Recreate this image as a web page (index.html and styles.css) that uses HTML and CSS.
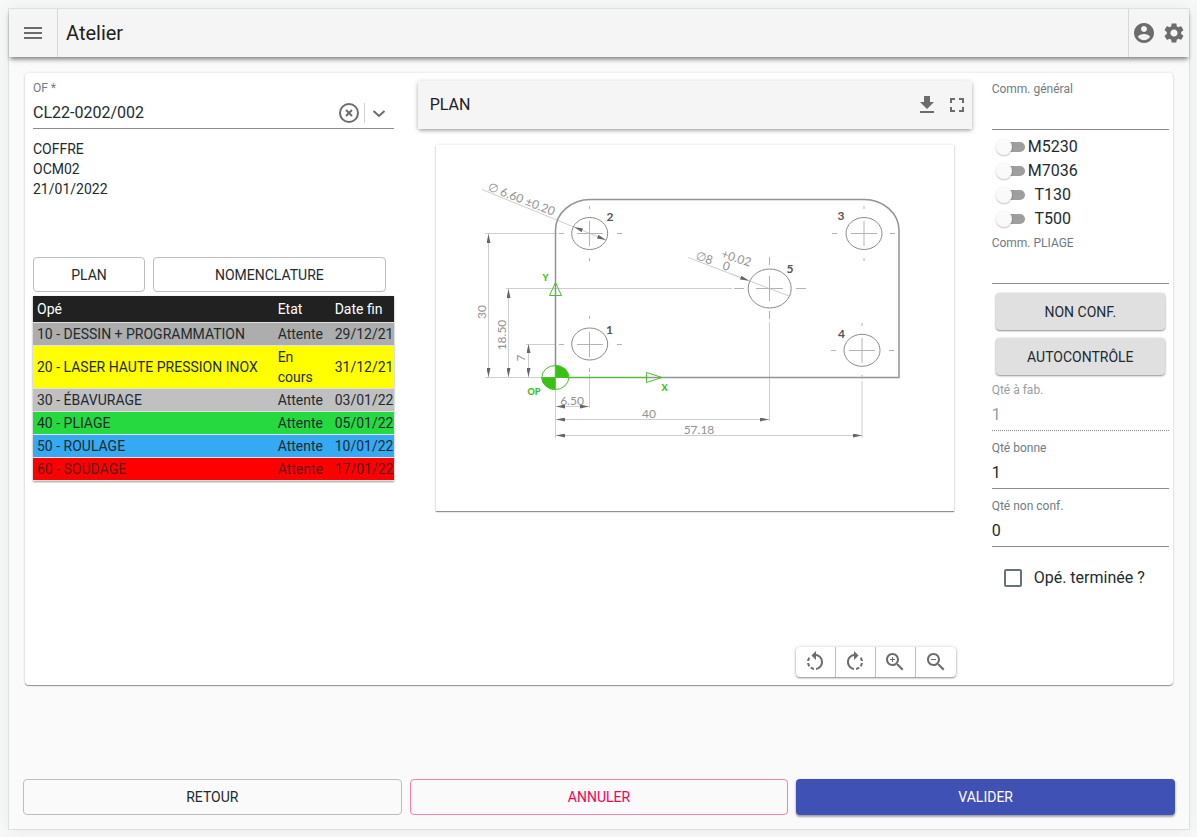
FILE: index.html
```html
<!DOCTYPE html>
<html lang="fr">
<head>
<meta charset="utf-8">
<title>Atelier</title>
<link rel="stylesheet" href="styles.css">
</head>
<body>
<div class="frame">
  <header class="appbar">
    <button class="icon-btn menu-btn" type="button" aria-label="Menu"><svg class="icon" viewBox="0 0 24 24"><path d="M3 18h18v-2H3v2zm0-5h18v-2H3v2zm0-7v2h18V6H3z"/></svg></button>
    <h1 class="title">Atelier</h1>
    <div class="appbar-actions">
      <button class="icon-btn" type="button" aria-label="Compte"><svg class="icon" viewBox="0 0 24 24"><path d="M12 2C6.48 2 2 6.48 2 12s4.48 10 10 10 10-4.48 10-10S17.52 2 12 2zm0 3c1.66 0 3 1.34 3 3s-1.34 3-3 3-3-1.34-3-3 1.34-3 3-3zm0 14.2c-2.5 0-4.71-1.28-6-3.22.03-1.99 4-3.08 6-3.08 1.99 0 5.97 1.09 6 3.08-1.29 1.94-3.5 3.22-6 3.22z"/></svg></button>
      <button class="icon-btn" type="button" aria-label="Paramètres"><svg class="icon" viewBox="0 0 24 24"><path d="M19.14 12.94c.04-.3.06-.61.06-.94 0-.32-.02-.64-.07-.94l2.03-1.58c.18-.14.23-.41.12-.61l-1.92-3.32c-.12-.22-.37-.29-.59-.22l-2.39.96c-.5-.38-1.03-.7-1.62-.94l-.36-2.54c-.04-.24-.24-.41-.48-.41h-3.84c-.24 0-.43.17-.47.41l-.36 2.54c-.59.24-1.13.57-1.62.94l-2.39-.96c-.22-.08-.47 0-.59.22L2.74 8.87c-.12.21-.08.47.12.61l2.03 1.58c-.05.3-.09.63-.09.94s.02.64.07.94l-2.03 1.58c-.18.14-.23.41-.12.61l1.92 3.32c.12.22.37.29.59.22l2.39-.96c.5.38 1.03.7 1.62.94l.36 2.54c.05.24.24.41.48.41h3.84c.24 0 .44-.17.47-.41l.36-2.54c.59-.24 1.13-.56 1.62-.94l2.39.96c.22.08.47 0 .59-.22l1.92-3.32c.12-.22.07-.47-.12-.61l-2.01-1.58zM12 15.6c-1.98 0-3.6-1.62-3.6-3.6s1.62-3.6 3.6-3.6 3.6 1.62 3.6 3.6-1.62 3.6-3.6 3.6z"/></svg></button>
    </div>
  </header>

  <main class="card">
    <section class="col-order">
      <div class="field">
        <label class="field-label" for="of">OF *</label>
        <div class="select-control">
          <input class="select-input" id="of" type="text" value="CL22-0202/002">
          <button class="icon-btn clear-btn" type="button" aria-label="Effacer"><svg class="icon" viewBox="0 0 24 24"><circle cx="12" cy="12" r="9" class="stroke"/><path class="stroke" d="M9 9l6 6M15 9l-6 6"/></svg></button>
          <button class="icon-btn open-btn" type="button" aria-label="Ouvrir"><svg class="icon" viewBox="0 0 24 24"><path class="stroke" d="M6.500 10l5.500 5 5.500-5"/></svg></button>
        </div>
      </div>
      <div class="order-info">
        <div>COFFRE</div>
        <div>OCM02</div>
        <div>21/01/2022</div>
      </div>
      <div class="order-tabs">
        <button class="btn btn-outlined" type="button">PLAN</button>
        <button class="btn btn-outlined" type="button">NOMENCLATURE</button>
      </div>
      <div class="table-wrap">
        <table class="ops">
          <colgroup><col><col class="col-state"><col class="col-date"></colgroup>
          <thead><tr><th scope="col">Opé</th><th scope="col">Etat</th><th scope="col">Date fin</th></tr></thead>
          <tbody>
            <tr class="row-grey"><td>10 - DESSIN + PROGRAMMATION</td><td>Attente</td><td>29/12/21</td></tr>
            <tr class="row-yellow"><td>20 - LASER HAUTE PRESSION INOX</td><td>En cours</td><td>31/12/21</td></tr>
            <tr class="row-silver"><td>30 - ÉBAVURAGE</td><td>Attente</td><td>03/01/22</td></tr>
            <tr class="row-green"><td>40 - PLIAGE</td><td>Attente</td><td>05/01/22</td></tr>
            <tr class="row-blue"><td>50 - ROULAGE</td><td>Attente</td><td>10/01/22</td></tr>
            <tr class="row-red"><td>60 - SOUDAGE</td><td>Attente</td><td>17/01/22</td></tr>
          </tbody>
        </table>
      </div>
    </section>

    <section class="col-plan">
      <div class="plan-head">
        <h2 class="plan-title">PLAN</h2>
        <button class="icon-btn" type="button" aria-label="Télécharger"><svg class="icon" viewBox="0 0 24 24"><path d="M19 9h-4V3H9v6H5l7 7 7-7zM5 18v2h14v-2H5z"/></svg></button>
        <button class="icon-btn" type="button" aria-label="Plein écran"><svg class="icon" viewBox="0 0 24 24"><path d="M7 14H5v5h5v-2H7v-3zm-2-4h2V7h3V5H5v5zm12 7h-3v2h5v-5h-2v3zM14 5v2h3v3h2V5h-5z"/></svg></button>
      </div>
      <div class="sheet">
        <svg class="drawing" viewBox="436 145 518 366" role="img" aria-label="Plan de la pièce">
          <defs>
            <marker id="arrow" viewBox="0 0 9 4" refX="9" refY="2" markerWidth="9" markerHeight="4" markerUnits="userSpaceOnUse" orient="auto-start-reverse"><path class="arrow-head" d="M0 0L9 2 0 4z"/></marker>
          </defs>
          <g class="dim">
            <path d="M485 233.500H557M506 288.500H732M526 344.500H556M485 377.500H545"/>
            <path d="M555.500 378V438M589.500 374V408M769.500 322V421M862 381V438"/>
            <path d="M482 189.500L574 227"/>
            <path d="M688 257.500L789 296"/>
          </g>
          <g class="dim">
            <path marker-start="url(#arrow)" marker-end="url(#arrow)" d="M488.500 234V377"/>
            <path marker-start="url(#arrow)" marker-end="url(#arrow)" d="M508.500 289V377"/>
            <path marker-start="url(#arrow)" marker-end="url(#arrow)" d="M528.500 344V377"/>
            <path marker-start="url(#arrow)" marker-end="url(#arrow)" d="M556 406.500H589"/>
            <path marker-start="url(#arrow)" marker-end="url(#arrow)" d="M556 419.500H769"/>
            <path marker-start="url(#arrow)" marker-end="url(#arrow)" d="M556 435.500H862"/>
            <path marker-start="url(#arrow)" marker-end="url(#arrow)" d="M574 227L606 240"/>
            <path marker-end="url(#arrow)" d="M730 273.500L749 280.700"/>
          </g>
          <path class="outline" d="M555.500 377.500V230A35 31 0 0 1 590.500 199.500H864A35 31 0 0 1 899 230V377.500z"/>
          <g class="hole">
            <ellipse cx="589.700" cy="233.500" rx="18" ry="16"/>
            <ellipse cx="864" cy="233.500" rx="18" ry="16"/>
            <ellipse cx="589.700" cy="344" rx="18" ry="16"/>
            <ellipse cx="862" cy="350.300" rx="18" ry="16"/>
            <ellipse cx="769.700" cy="288.500" rx="21.500" ry="19.500"/>
          </g>
          <g class="axis">
            <path d="M577 233.500h26M589.500 221v25M559 233.500h5M617 233.500h5M589.500 206v3M589.500 258v3"/>
            <path d="M851 233.500h26M864 221v25M832 233.500h5M890 233.500h5M864 206v3M864 258v3"/>
            <path d="M577 344.500h26M589.500 332v25M559 344.500h5M617 344.500h5M589.500 316v3M589.500 368v4"/>
            <path d="M849 350.500h26M862 338v25M831 350.500h5M889 350.500h5M862 323v3M862 375v4"/>
            <path d="M756 288.500h27M769.500 276v25M734 288.500h10M796 288.500h10M769.500 257v8M769.500 311v8"/>
          </g>
          <g class="origin">
            <path d="M555.500 377.500V283M555.500 377.500H647"/>
            <path d="M549.500 295.500h12l-6-13zM646.500 372.500v10l15.500-5z"/>
            <ellipse class="origin-disc" cx="555.300" cy="377.500" rx="13.500" ry="12"/>
            <path class="origin-fill" d="M555.300 377.500V365.500A13.500 12 0 0 1 568.800 377.500zM555.300 377.500V389.500A13.500 12 0 0 1 541.800 377.500z"/>
          </g>
          <g class="origin-text">
            <text x="545.500" y="281">Y</text><text x="664.500" y="391">X</text><text x="534" y="395">OP</text>
          </g>
          <g class="hole-text">
            <text x="610" y="221">2</text><text x="841" y="220">3</text><text x="609.500" y="334">1</text><text x="841.500" y="338">4</text><text x="790" y="273">5</text>
          </g>
          <g class="dim-text">
            <text x="572" y="405">6.50</text><text x="649" y="418">40</text><text x="699" y="434">57.18</text>
            <text transform="translate(486 312) rotate(-90)">30</text>
            <text transform="translate(506 335) rotate(-90)">18.50</text>
            <text transform="translate(525 358) rotate(-90)">7</text>
            <text transform="translate(520 203) rotate(21)">∅ 6.60 ±0.20</text>
            <text transform="translate(703 262) rotate(18)">∅8</text>
            <text transform="translate(735 262) rotate(18)">+0.02</text>
            <text transform="translate(725 270) rotate(18)">0</text>
          </g>
        </svg>
      </div>
      <div class="tools">
        <button class="tool" type="button" aria-label="Rotation à gauche"><svg class="icon" viewBox="0 0 24 24"><path d="M7.110 8.530L5.700 7.110C4.800 8.270 4.240 9.610 4.070 11h2.020c.14-.87.49-1.720 1.020-2.470zM6.090 13H4.070c.17 1.390.72 2.730 1.620 3.890l1.410-1.420c-.52-.75-.87-1.590-1.010-2.470zm1.010 5.320c1.160.9 2.510 1.440 3.900 1.610V17.900c-.87-.15-1.710-.49-2.460-1.030L7.100 18.320zM13 4.070V1L8.450 5.550 13 10V6.090c2.840.48 5 2.940 5 5.910s-2.160 5.430-5 5.910v2.020c3.950-.49 7-3.850 7-7.930s-3.050-7.440-7-7.930z"/></svg></button>
        <button class="tool" type="button" aria-label="Rotation à droite"><svg class="icon" viewBox="0 0 24 24"><path d="M15.550 5.550L11 1v3.070C7.060 4.560 4 7.920 4 12s3.050 7.440 7 7.930v-2.020c-2.840-.48-5-2.940-5-5.910s2.160-5.430 5-5.910V10l4.550-4.450zM19.930 11c-.17-1.390-.72-2.730-1.620-3.890l-1.420 1.420c.54.75.88 1.600 1.020 2.470h2.020zM13 17.900v2.020c1.390-.17 2.740-.71 3.900-1.610l-1.440-1.440c-.75.54-1.590.89-2.460 1.030zm3.890-2.420l1.420 1.410c.9-1.160 1.450-2.500 1.620-3.890h-2.020c-.14.87-.48 1.720-1.020 2.480z"/></svg></button>
        <button class="tool" type="button" aria-label="Zoom avant"><svg class="icon" viewBox="0 0 24 24"><path d="M15.500 14h-.79l-.28-.27C15.410 12.590 16 11.110 16 9.500 16 5.910 13.090 3 9.500 3S3 5.910 3 9.500 5.910 16 9.500 16c1.610 0 3.090-.59 4.230-1.570l.27.28v.79l5 4.990L20.490 19l-4.990-5zm-6 0C7.010 14 5 11.990 5 9.500S7.010 5 9.500 5 14 7.010 14 9.500 11.990 14 9.500 14zM12 10h-2v2H9v-2H7V9h2V7h1v2h2v1z"/></svg></button>
        <button class="tool" type="button" aria-label="Zoom arrière"><svg class="icon" viewBox="0 0 24 24"><path d="M15.500 14h-.79l-.28-.27C15.410 12.590 16 11.110 16 9.500 16 5.910 13.090 3 9.500 3S3 5.910 3 9.500 5.910 16 9.500 16c1.610 0 3.090-.59 4.230-1.570l.27.28v.79l5 4.990L20.490 19l-4.990-5zm-6 0C7.010 14 5 11.990 5 9.500S7.010 5 9.500 5 14 7.010 14 9.500 11.990 14 9.500 14zM7 9h5v1H7z"/></svg></button>
      </div>
    </section>

    <section class="col-entry">
      <div class="field">
        <label class="field-label" for="comm-general">Comm. général</label>
        <textarea class="field-input" id="comm-general" rows="1"></textarea>
      </div>
      <div class="switches">
        <label class="switch-row"><input class="switch" type="checkbox"><span class="switch-name">M5230</span></label>
        <label class="switch-row"><input class="switch" type="checkbox"><span class="switch-name">M7036</span></label>
        <label class="switch-row"><input class="switch" type="checkbox"><span class="switch-name">T130</span></label>
        <label class="switch-row"><input class="switch" type="checkbox"><span class="switch-name">T500</span></label>
      </div>
      <div class="field">
        <label class="field-label" for="comm-pliage">Comm. PLIAGE</label>
        <textarea class="field-input" id="comm-pliage" rows="1"></textarea>
      </div>
      <div class="entry-actions">
        <button class="btn btn-grey" type="button">NON CONF.</button>
        <button class="btn btn-grey" type="button">AUTOCONTRÔLE</button>
      </div>
      <div class="quantities">
        <div class="field field-disabled">
          <label class="field-label" for="qte-fab">Qté à fab.</label>
          <input class="field-input" id="qte-fab" type="text" value="1" disabled>
        </div>
        <div class="field">
          <label class="field-label" for="qte-bonne">Qté bonne</label>
          <input class="field-input" id="qte-bonne" type="text" value="1">
        </div>
        <div class="field">
          <label class="field-label" for="qte-nc">Qté non conf.</label>
          <input class="field-input" id="qte-nc" type="text" value="0">
        </div>
      </div>
      <label class="done"><input class="checkbox" type="checkbox"><span>Opé. terminée ?</span></label>
    </section>
  </main>

  <footer class="footer">
    <button class="btn btn-outlined" type="button">RETOUR</button>
    <button class="btn btn-outlined btn-pink" type="button">ANNULER</button>
    <button class="btn btn-primary" type="button">VALIDER</button>
  </footer>
</div>
</body>
</html>
```
FILE: styles.css
```css
*, *::before, *::after { box-sizing: border-box; }

body {
  margin: 0;
  padding: 8px 7px 7px 8px;
  min-height: 100vh;
  display: flex;
  background: #f7f9f8;
  color: #212b2f;
  font: 14px/20px Roboto, "Liberation Sans", sans-serif;
}

button, input, textarea { font: inherit; color: inherit; }
button { cursor: pointer; }

.frame {
  flex: 1;
  min-width: 0;
  display: flex;
  flex-direction: column;
  border: 1px solid #dfe1e0;
  background: #fafafa;
  box-shadow: 0 0 16px rgba(0, 20, 10, 0.06);
}

/* Top bar */
.appbar {
  display: flex;
  align-items: stretch;
  height: 48px;
  background: #f5f5f5;
  box-shadow: 0 3px 4px -1px rgba(0, 0, 0, 0.4), 0 5px 6px -2px rgba(0, 0, 0, 0.14);
}
.icon-btn {
  display: flex;
  align-items: center;
  justify-content: center;
  flex: none;
  width: 30px;
  padding: 0;
  border: 0;
  background: none;
}
.icon { width: 24px; height: 24px; fill: #6c6c6c; }
.stroke { fill: none; stroke: #6c6c6c; stroke-width: 2; }
.menu-btn { width: 49px; border-right: 1px solid #d6d8d7; }
.title { flex: 1; margin: 0; padding-left: 8px; font-size: 20px; font-weight: 400; line-height: 48px; color: #212121; }
.appbar-actions { display: flex; border-left: 1px solid #d6d8d7; }

/* Card */
.card {
  flex: 1;
  display: grid;
  grid-template-columns: minmax(0, 4fr) minmax(0, 6fr) minmax(0, 2fr);
  margin: 16px 16px 0;
  border-radius: 4px;
  background: #fff;
  box-shadow: 0 1px 1px rgba(0, 0, 0, 0.4), 0 0 3px rgba(0, 0, 0, 0.12);
}

/* Fields */
.field { display: flex; flex-direction: column; }
.field-label { font-size: 12px; line-height: 16px; color: #6f7b82; }
.field-input, .select-control {
  display: block;
  width: 100%;
  height: 33px;
  padding: 0;
  border: 0;
  border-bottom: 1px solid #8c8c8c;
  border-radius: 0;
  outline: 0;
  background: none;
  font-size: 16px;
  line-height: 32px;
  resize: none;
}
.field-disabled .field-label { color: #959da1; }
.field-disabled .field-input { color: #9a9a9a; border-bottom-style: dotted; }

/* Order column */
.col-order { padding: 7px 14px 8px 8px; }
.select-control { display: flex; align-items: center; padding-top: 2px; }
.select-input { flex: 1; min-width: 0; padding: 0; border: 0; background: none; outline: 0; }
.open-btn { height: 20px; border-left: 1px solid #d0d0d0; }
.order-info { padding: 10px 0 58px; }
.order-tabs { display: grid; grid-template-columns: 112px minmax(0, 1fr); gap: 8px; padding-right: 8px; }

.btn {
  height: 36px;
  padding: 0 8px;
  border: 0;
  border-radius: 4px;
  font-size: 14px;
  background: none;
}
.btn-outlined { border: 1px solid #bdbdbd; }
.order-tabs .btn { height: 35px; background: #fff; }

.table-wrap { margin-top: 4px; overflow: hidden; box-shadow: 0 1px 2px rgba(0, 0, 0, 0.4); }
.ops { width: 100%; table-layout: fixed; border-collapse: separate; border-spacing: 0; }
.col-state { width: 57px; }
.col-date { width: 63px; }
.ops th { padding: 3px 0 3px 4px; border-bottom: 1px solid #e0e0e0; background: #212121; background-clip: padding-box; color: #fff; font-weight: 400; text-align: left; white-space: nowrap; }
.ops td { padding: 1px 4px; border-bottom: 1px solid #e0e0e0; }
.ops td:last-child { padding-right: 0; white-space: nowrap; }
.ops td:first-child { white-space: nowrap; }
.row-grey { background: #adadad; }
.row-yellow { background: #ffff00; }
.row-silver { background: #c0c0c0; }
.row-green { background: #27d941; }
.row-blue { background: #35a9f1; }
.row-red { background: #ff0000; color: #5c1a1c; }

/* Drawing column */
.col-plan { display: flex; flex-direction: column; padding: 8px 10px; }
.plan-head {
  display: flex;
  align-items: stretch;
  height: 48px;
  padding-left: 12px;
  background: #f5f5f5;
  box-shadow: 0 2px 4px -1px rgba(0, 0, 0, 0.3), 0 1px 5px rgba(0, 0, 0, 0.18);
}
.plan-title { flex: 1; margin: 0; font-size: 16px; font-weight: 400; line-height: 48px; color: #212121; }
.sheet { margin: 16px 18px; background: #fff; box-shadow: 0 1px 1px rgba(0, 0, 0, 0.4), 0 0 3px rgba(0, 0, 0, 0.12); }
.drawing { display: block; width: 100%; height: auto; }
.dim path { fill: none; stroke: #cecece; }
.arrow-head { fill: #666; }
.outline { fill: none; stroke: #939393; stroke-width: 1.500; }
.hole ellipse { fill: none; stroke: #8a8a8a; }
.axis path { fill: none; stroke: #b4b4b4; }
.origin { fill: none; stroke: #49c02c; }
.origin .origin-disc { fill: #fff; }
.origin .origin-fill { fill: #38c312; }
.drawing text { font-family: Lato, "Open Sans", sans-serif; text-anchor: middle; }
.origin-text { fill: #38c312; font-size: 9px; font-weight: 900; }
.hole-text { fill: #555; font-size: 12px; font-weight: 700; }
.dim-text { fill: #929292; font-size: 12px; }

.tools {
  display: flex;
  align-self: flex-end;
  margin: auto 16px 0 0;
  border-radius: 4px;
  background: #fff;
  box-shadow: 0 1px 2px rgba(0, 0, 0, 0.4), 0 0 4px rgba(0, 0, 0, 0.14);
}
.tool {
  display: flex;
  align-items: center;
  justify-content: center;
  width: 40px;
  height: 30px;
  padding: 0;
  border: 0;
  background: none;
}
.tool:not(:last-child) { border-right: 1px solid #bdbdbd; }

/* Entry column */
.col-entry { padding: 8px 4px 8px 10px; }
.switches { padding: 5px 0 4px; }
.switch-row { display: flex; align-items: center; height: 24px; font-size: 16px; }
.switch {
  appearance: none;
  flex: none;
  position: relative;
  width: 26px;
  height: 10px;
  margin: 0 3px 0 7px;
  border-radius: 5px;
  background: #9e9e9e;
}
.switch::before {
  content: "";
  position: absolute;
  left: -3px;
  top: -3px;
  width: 16px;
  height: 16px;
  border-radius: 50%;
  background: #fafafa;
  box-shadow: 0 1px 2px rgba(0, 0, 0, 0.25);
}
.switch:checked::before { left: 13px; }
.switch-name { min-width: 50px; text-align: center; }

.entry-actions { display: grid; gap: 8px; padding: 9px 4px 7px; }
.btn-grey { height: 37px; background: #e0e0e0; box-shadow: 0 1px 2px rgba(0, 0, 0, 0.4), 0 0 3px rgba(0, 0, 0, 0.12); }
.quantities { display: grid; gap: 9px; }
.done { display: flex; align-items: center; gap: 12px; padding: 19px 0 0 12px; font-size: 16px; line-height: 24px; }
.checkbox { appearance: none; width: 18px; height: 18px; margin: 0; border: 2px solid #66737a; border-radius: 2px; }
.checkbox:checked { background: #3f51b5; }

/* Footer */
.footer { display: grid; grid-template-columns: repeat(3, minmax(0, 1fr)); gap: 8px; padding: 94px 14px 14px; }
.btn-pink { border-color: #f77fab; color: #f50057; }
.btn-primary { background: #3f51b5; color: #fff; box-shadow: 0 2px 2px rgba(0, 0, 0, 0.25), 0 1px 3px rgba(0, 0, 0, 0.2); }
```
